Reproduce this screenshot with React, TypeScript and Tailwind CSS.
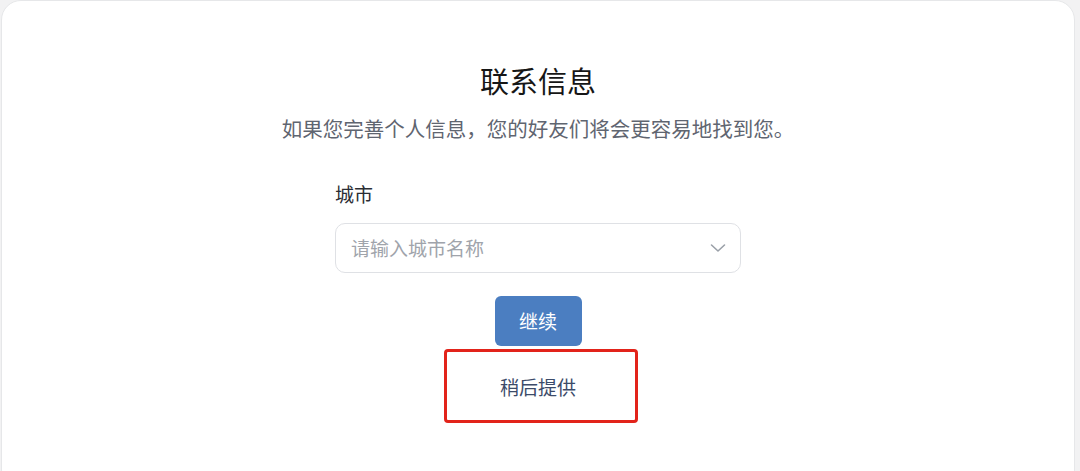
import React, { useState } from "react";

const ChevronDown = () => (
  <svg width="20" height="20" viewBox="0 0 20 20" fill="none" stroke="#9aa0a8" strokeWidth="1.6" strokeLinecap="round" strokeLinejoin="round">
    <path d="M3.5 7l6.5 6 6.5-6" />
  </svg>
);

const App: React.FC = () => {
  const [city, setCity] = useState("");

  return (
    <div
      className="h-[471px] overflow-hidden bg-[#f2f2f3] pl-[1px] pr-[5px]"
      style={{ fontFamily: '"Noto Sans CJK SC", "Noto Sans", sans-serif' }}
    >
      <div className="h-[490px] rounded-[20px] border border-[#e6e7e9] bg-white flex flex-col items-center">
        {/* Heading */}
        <h1 className="mt-[61px] text-[29px] leading-[36px] font-normal text-[#161616]">联系信息</h1>
        <p className="mt-[16px] text-[20.5px] leading-[28px] text-[#5f6570]">
          如果您完善个人信息，您的好友们将会更容易地找到您。
        </p>

        {/* City field */}
        <div className="mt-[39px] w-[406px] flex flex-col">
          <label className="text-[19px] leading-[26px] text-[#2a2d33]">城市</label>
          <div className="mt-[16px] h-[50px] rounded-[10px] border border-[#dfe1e5] flex items-center pl-[15px] pr-[12px]">
            <input
              value={city}
              onChange={(e) => setCity(e.target.value)}
              placeholder="请输入城市名称"
              className="flex-1 bg-transparent outline-none text-[19px] text-[#2a2d33] placeholder:text-[#a0a4ab]"
            />
            <ChevronDown />
          </div>
        </div>

        {/* Actions */}
        <button className="mt-[23px] w-[87px] h-[50px] rounded-[6px] bg-[#4b7ec1] text-white text-[19px]">
          继续
        </button>
        <div className="mt-[3px] ml-[6px] w-[194px] h-[74px] rounded-[4px] border-[3px] border-[#e2231a] flex items-center justify-center">
          <button className="text-[19px] text-[#3c4b69] -ml-[6px] mt-[2px]">稍后提供</button>
        </div>
      </div>
    </div>
  );
};

export default App;
